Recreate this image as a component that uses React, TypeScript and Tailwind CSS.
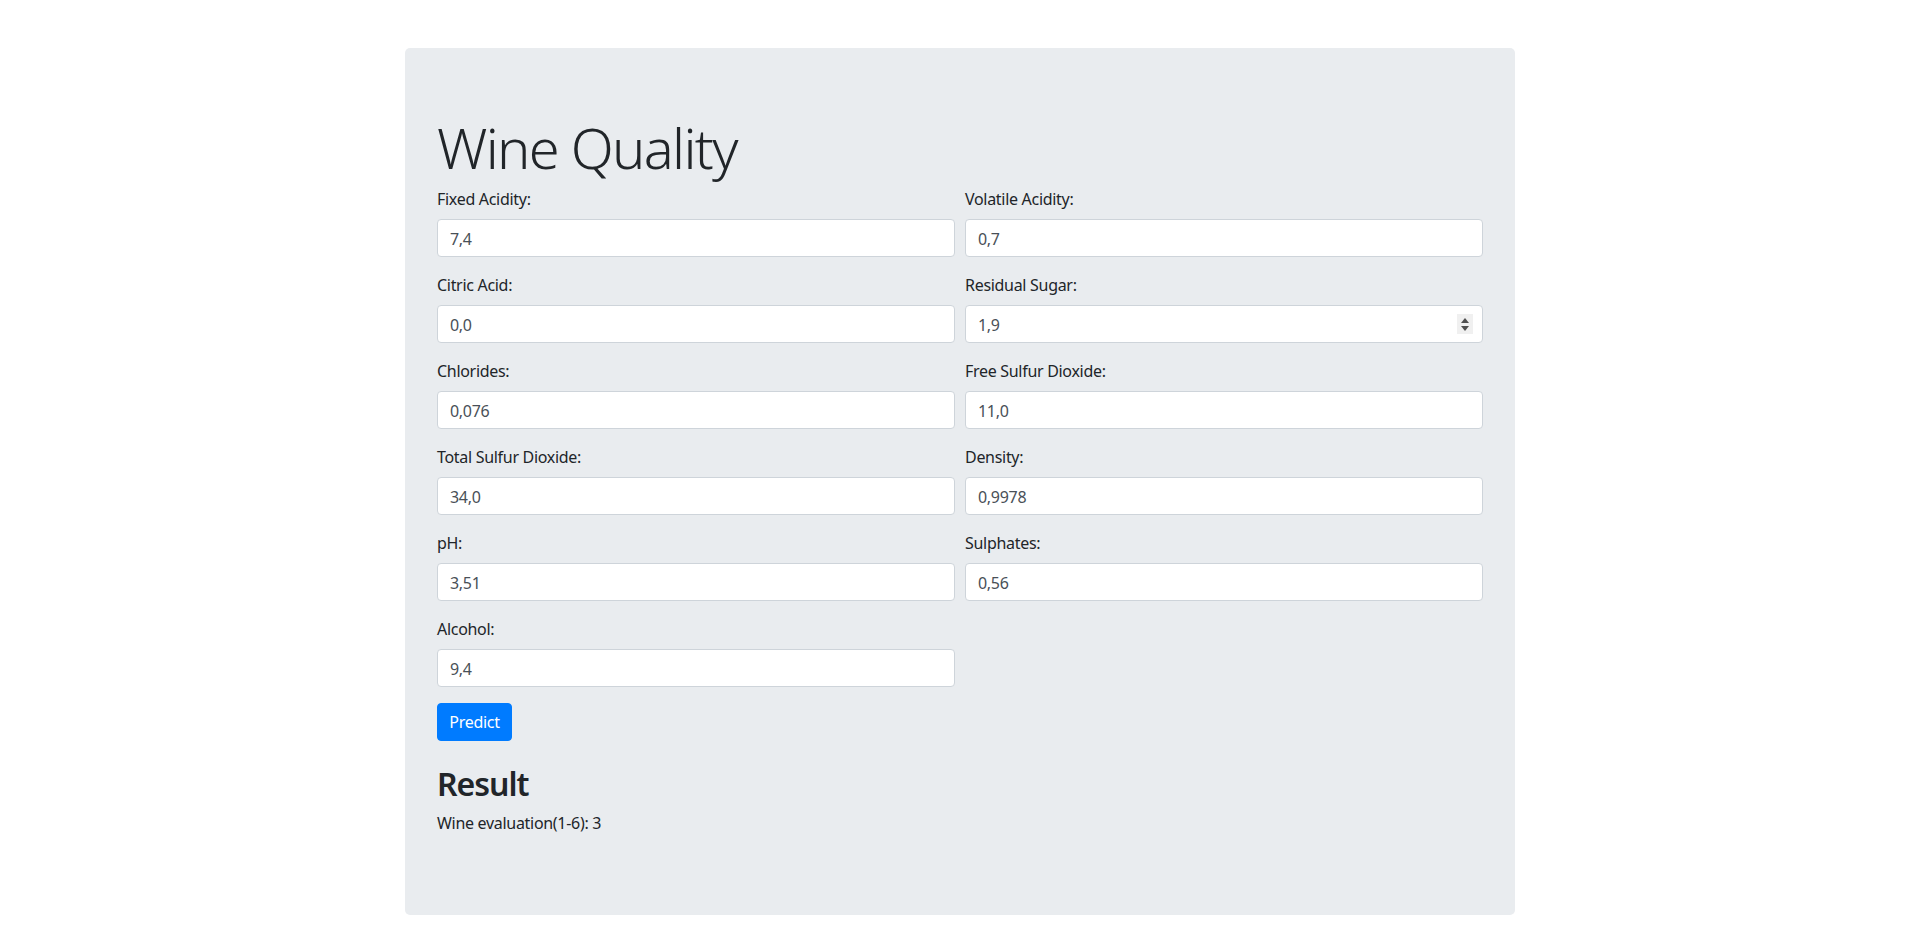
import React from "react";

const fields: [string, string][] = [
  ["Fixed Acidity:", "7,4"],
  ["Volatile Acidity:", "0,7"],
  ["Citric Acid:", "0,0"],
  ["Residual Sugar:", "1,9"],
  ["Chlorides:", "0,076"],
  ["Free Sulfur Dioxide:", "11,0"],
  ["Total Sulfur Dioxide:", "34,0"],
  ["Density:", "0,9978"],
  ["pH:", "3,51"],
  ["Sulphates:", "0,56"],
  ["Alcohol:", "9,4"],
];

export default function App() {
  return (
    <div
      className="min-h-[948px] bg-white pt-12 text-[16px] leading-[24px] tracking-[-0.3px] text-[#212529]"
      style={{ fontFamily: '"Segoe UI", "Noto Sans", "Open Sans", sans-serif' }}
    >
      <div className="mx-auto w-[1110px] rounded-[5px] bg-[#e9ecef] px-8 py-16">
        <h1 className="mb-2 pt-[3px] pb-0 text-[56px] font-light leading-[64px] tracking-[-1.7px]">Wine Quality</h1>
        <form>
          <div className="grid grid-cols-2 gap-x-[10px]">
            {fields.map(([label, value]) => (
              <div key={label} className="mb-4">
                <label className="mb-2 block h-6">{label}</label>
                <div className="relative">
                  <input
                    type="text"
                    defaultValue={value}
                    className="block h-[38px] w-full rounded-[4px] border border-[#ced4da] bg-white px-3 pt-[7px] pb-[5px] text-[16px] tracking-[-0.3px] text-[#495057] outline-none"
                  />
                  {label === "Residual Sugar:" && (
                    <div className="absolute right-[10px] top-[9px] flex h-[20px] w-[16px] flex-col items-center justify-center gap-[3px] bg-[#f0f0f0]">
                      <svg width="8" height="5" viewBox="0 0 8 5">
                        <path d="M4 0 L8 5 L0 5 Z" fill="#505050" />
                      </svg>
                      <svg width="8" height="5" viewBox="0 0 8 5">
                        <path d="M0 0 L8 0 L4 5 Z" fill="#505050" />
                      </svg>
                    </div>
                  )}
                </div>
              </div>
            ))}
          </div>
          <button
            type="button"
            className="h-[38px] w-[75px] rounded-[4px] border border-[#007bff] bg-[#007bff] text-[16px] leading-[24px] tracking-[-0.3px] text-white"
          >
            Predict
          </button>
        </form>
        <h2 className="mb-2 mt-6 text-[32px] font-semibold leading-[38px] tracking-[-1px]">Result</h2>
        <p className="mb-4">Wine evaluation(1-6): 3</p>
      </div>
    </div>
  );
}
